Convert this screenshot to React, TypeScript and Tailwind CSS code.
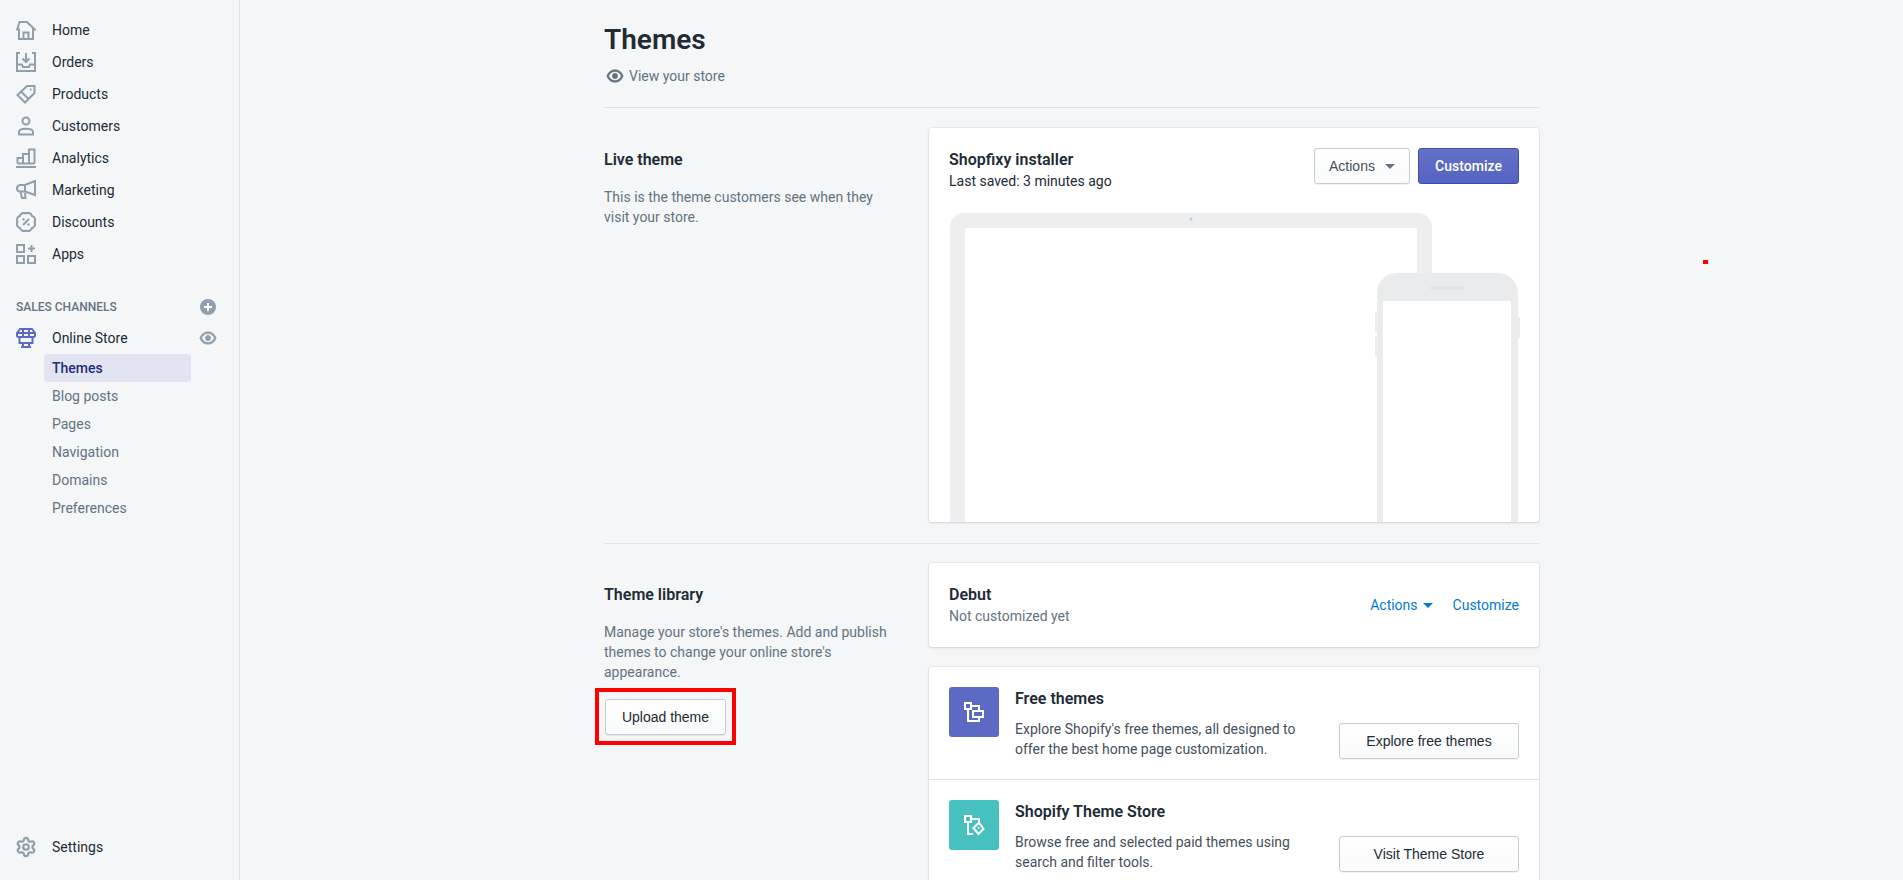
import React from "react";
import { Settings } from "lucide-react";

const Ico = ({ children, color = "#919eab", w = 2 }: { children: React.ReactNode; color?: string; w?: number }) => (
  <svg width="20" height="20" viewBox="0 0 20 20" fill="none" stroke={color} strokeWidth={w} className="shrink-0">
    {children}
  </svg>
);

const nav: [string, React.ReactNode][] = [
  ["Home", <Ico><path d="M3 19V9.5H1.2L3.5 2H11L18.8 9.5H17V19ZM7.5 19V12.5H12.5V19" /></Ico>],
  ["Orders", <Ico><path d="M4 1H1V19H19V1H16M1 12.5H6L7 15H13L14 12.5H19M10 1V9.5M6.5 6.5L10 10L13.5 6.5" /></Ico>],
  ["Products", <Ico><path d="M11 2H18.5V9L9 18.5L1.5 11ZM5 7.5L12.5 15" /><circle cx="14.7" cy="5.5" r="1" fill="#919eab" stroke="none" /></Ico>],
  ["Customers", <Ico><circle cx="10" cy="5" r="3.5" /><path d="M3 16C3 11.5 17 11.5 17 16V18.5H3Z" /></Ico>],
  ["Analytics", <Ico><path d="M1.5 15.5V10H7V15.5M7 15.5V6H13V15.5M13 15.5V1.5H18.5V15.5M1.5 15.5H18.5M0 19H20" /></Ico>],
  ["Marketing", <Ico><path d="M19 1V15L9 11.5H4C2 11.5 1 10 1 8.5S2 5 4 5H9ZM9 5V11.5M4.5 11.5L6 18H9.5L9 13" /></Ico>],
  ["Discounts", <Ico><path d="M10 1.5A4 4 0 0 1 16 4A4 4 0 0 1 18.5 10A4 4 0 0 1 16 16A4 4 0 0 1 10 18.5A4 4 0 0 1 4 16A4 4 0 0 1 1.5 10A4 4 0 0 1 4 4A4 4 0 0 1 10 1.5ZM13 7L7 13" /><circle cx="7.5" cy="7.5" r="1.2" fill="#919eab" stroke="none" /><circle cx="12.5" cy="12.5" r="1.2" fill="#919eab" stroke="none" /></Ico>],
  ["Apps", <Ico><rect x="1" y="1" width="7" height="7" /><rect x="1" y="12" width="7" height="7" /><rect x="12" y="12" width="7" height="7" /><path d="M15.5 1V8M12 4.5H19" /></Ico>],
];

const EYE = "M18.98 9.8a1 1 0 0 1 0 .4C18.97 10.28 17 17 10 17S1.03 10.28 1.02 10.2a1 1 0 0 1 0-.4C1.03 9.72 3 3 10 3s8.97 6.72 8.98 6.8zM10 5C5.4 5 3.5 9 3.05 10 3.5 11 5.4 15 10 15s6.5-4 6.95-5C16.5 9 14.6 5 10 5zm0 8a3 3 0 1 1 0-6 3 3 0 0 1 0 6z";

const Eye = ({ color }: { color: string }) => (
  <svg width="18" height="18" viewBox="0 0 20 20" fill={color} stroke={color} strokeWidth="0.6" className="shrink-0">
    <path fillRule="evenodd" d={EYE} />
  </svg>
);

const Caret = ({ color }: { color: string }) => (
  <svg width="10" height="5" viewBox="0 0 10 5" fill={color} className="shrink-0"><path d="M0 0H10L5 5Z" /></svg>
);

const btn =
  "h-9 rounded-[3px] border border-[#c4cdd5] bg-gradient-to-b from-white to-[#f9fafb] text-[14px] text-[#212b36] shadow-[0_1px_0_rgba(22,29,37,0.05)] font-['Liberation_Sans',sans-serif] flex items-center justify-center";
const card = "bg-white rounded-[3px] shadow-[0_0_0_1px_rgba(63,63,68,0.05),0_1px_3px_0_rgba(63,63,68,0.15)]";

const Feature = ({ tile, icon, title, desc, action }: { tile: string; icon: React.ReactNode; title: string; desc: string[]; action: string }) => (
  <div className="flex items-end pl-5 pr-5 pt-5 pb-5 h-[112px]">
    <div className="self-start flex">
      <div className={`w-[50px] h-[50px] rounded-[3px] ${tile}`}>
        <svg width="50" height="50" viewBox="0 0 50 50" fill="none" stroke="#fff" strokeWidth="2">{icon}</svg>
      </div>
      <div className="ml-4 pt-[2px]">
        <div className="text-[16px] leading-5 font-semibold text-[#212b36]">{title}</div>
        <div className="mt-[10px] w-[290px] text-[14px] leading-5 text-[#454f5b]">
          {desc.map((d) => <div key={d}>{d}</div>)}
        </div>
      </div>
    </div>
    <button className={`${btn} ml-auto w-[180px]`}>{action}</button>
  </div>
);

export default function App() {
  return (
    <div className="relative flex h-[880px] overflow-hidden bg-[#f4f6f8] font-['Roboto',sans-serif] text-[14px] text-[#212b36]">
      <aside className="w-[240px] shrink-0 border-r border-[#dfe3e8] flex flex-col pt-[14px] pb-[17px]">
        {nav.map(([label, icon]) => (
          <div key={label} className="h-8 flex items-center pl-4 gap-4 text-[#212b36]">
            {icon}
            <span>{label}</span>
          </div>
        ))}
        <div className="mt-[25px] h-6 flex items-center pl-4 pr-[23px] justify-between">
          <span className="text-[12px] font-medium text-[#637381]">SALES CHANNELS</span>
          <svg width="16" height="16" viewBox="0 0 16 16"><circle cx="8" cy="8" r="8" fill="#919eab" /><path d="M8 4V12M4 8H12" stroke="#fff" strokeWidth="2" /></svg>
        </div>
        <div className="mt-[3px] h-8 flex items-center pl-4 pr-[22px] gap-4">
          <Ico color="#5c6ac4" w={2}><path d="M4 1H16L19 5V7.5C19 9 17.5 9 17 9H3C2.5 9 1 9 1 7.5V5ZM1 5H19M7 1V9M13 1V9M3.5 9V15H16.5V9M7 15V19M13 15V19M5 19H15" /></Ico>
          <span>Online Store</span>
          <span className="ml-auto"><Eye color="#919eab" /></span>
        </div>
        <div className="ml-[44px] w-[147px] h-7 flex items-center pl-2 rounded-[3px] bg-[#e2e5f1] font-medium text-[#202e78]">Themes</div>
        {["Blog posts", "Pages", "Navigation", "Domains", "Preferences"].map((s) => (
          <div key={s} className="ml-[44px] h-7 flex items-center pl-2 text-[#637381]">{s}</div>
        ))}
        <div className="mt-auto h-8 flex items-center pl-4 gap-[15px]">
          <Settings size={22} color="#919eab" strokeWidth={2.4} className="shrink-0 -ml-[1px]" />
          <span>Settings</span>
        </div>
      </aside>

      <main className="flex-1 min-w-0">
        <div className="mx-auto w-[935px] pt-6">
          <h1 className="text-[28px] leading-8 font-semibold text-[#212b36]">Themes</h1>
          <div className="mt-[10px] h-5 flex items-center gap-[5px] pl-[2px] text-[#637381]">
            <Eye color="#637381" />
            <span>View your store</span>
          </div>
          <div className="mt-[21px] h-px bg-[#dfe3e8]" />

          <section className="mt-5 flex justify-between">
            <div className="w-[290px] pt-[22px]">
              <h2 className="text-[16px] leading-5 font-semibold">Live theme</h2>
              <p className="mt-[17px] leading-5 text-[#637381]">This is the theme customers see when they visit your store.</p>
            </div>
            <div className={`${card} w-[610px] h-[394px] overflow-hidden`}>
              <div className="flex justify-between pt-5 pl-5 pr-5">
                <div className="pt-[2px]">
                  <div className="text-[16px] leading-5 font-semibold">Shopfixy installer</div>
                  <div className="mt-[1px] leading-5 text-[#212b36]">Last saved: 3 minutes ago</div>
                </div>
                <div className="flex gap-2">
                  <button className={`${btn} w-[96px] gap-[10px] text-[#454f5b]`}>Actions <Caret color="#637381" /></button>
                  <button className="h-9 w-[101px] rounded-[3px] border border-[#3f4eae] bg-gradient-to-b from-[#6371c7] to-[#5563c1] text-white text-[14px] font-medium flex items-center justify-center">Customize</button>
                </div>
              </div>
              <svg width="572" height="309" viewBox="0 0 572 309" className="mt-[22px] ml-5 block">
                <rect x="1" y="0" width="482" height="400" rx="14" fill="#eceef0" />
                <rect x="16" y="15" width="452" height="400" rx="2" fill="#fff" />
                <circle cx="242" cy="6" r="1.5" fill="#c4cdd5" />
                <rect x="426" y="99" width="4" height="20" rx="1" fill="#eaebed" />
                <rect x="426" y="123" width="4" height="21" rx="1" fill="#eaebed" />
                <rect x="567" y="104" width="4" height="21" rx="1" fill="#eaebed" />
                <rect x="428" y="60" width="141" height="300" rx="20" fill="#eaebed" />
                <rect x="434" y="88" width="128" height="280" rx="2" fill="#fff" />
                <rect x="481" y="73" width="35" height="4" rx="2" fill="#e2e4e6" />
              </svg>
            </div>
          </section>

          <div className="mt-[21px] h-px bg-[#dfe3e8]" />

          <section className="mt-[19px] flex justify-between">
            <div className="w-[290px] pt-[22px]">
              <h2 className="text-[16px] leading-5 font-semibold">Theme library</h2>
              <p className="mt-[17px] leading-5 text-[#637381]">Manage your store's themes. Add and publish themes to change your online store's appearance.</p>
              <div className="relative mt-[17px] ml-px w-[121px]">
                <button className={`${btn} w-[121px]`}>Upload theme</button>
                <div className="absolute -left-[10px] -right-[10px] -top-[11px] -bottom-[10px] border-4 border-[#ff0000]" />
              </div>
            </div>
            <div className="w-[610px]">
              <div className={`${card} h-[84px] flex items-center justify-between pl-5 pr-5`}>
                <div className="mt-[1px]">
                  <div className="text-[16px] leading-5 font-semibold">Debut</div>
                  <div className="leading-5 mt-[1px] text-[#637381]">Not customized yet</div>
                </div>
                <div className="flex items-center gap-5 text-[14px] text-[#007ace]">
                  <span className="flex items-center gap-[5px]">Actions <Caret color="#007ace" /></span>
                  <span>Customize</span>
                </div>
              </div>
              <div className={`${card} mt-5`}>
                <Feature
                  tile="bg-[#5c6ac4]"
                  title="Free themes"
                  desc={["Explore Shopify's free themes, all designed to", "offer the best home page customization."]}
                  action="Explore free themes"
                  icon={<><rect x="16" y="16" width="6" height="6" /><path d="M22 19H30V24M19 22V34H30V30" /><rect x="24" y="24" width="10" height="6" /></>}
                />
                <div className="h-px bg-[#dfe3e8]" />
                <Feature
                  tile="bg-[#47c1bf]"
                  title="Shopify Theme Store"
                  desc={["Browse free and selected paid themes using", "search and filter tools."]}
                  action="Visit Theme Store"
                  icon={<><rect x="16" y="16" width="6" height="6" /><path d="M22 19H30V23M19 22V34H24" /><path d="M24.5 28L28.5 24H31L34.5 29L29.5 34Z" /><circle cx="29.5" cy="28" r="1" fill="#fff" stroke="none" /></>}
                />
              </div>
            </div>
          </section>
        </div>
      </main>

      <div className="absolute left-[1703px] top-[260px] w-[5px] h-[4px] bg-[#ff0000]" />
    </div>
  );
}
